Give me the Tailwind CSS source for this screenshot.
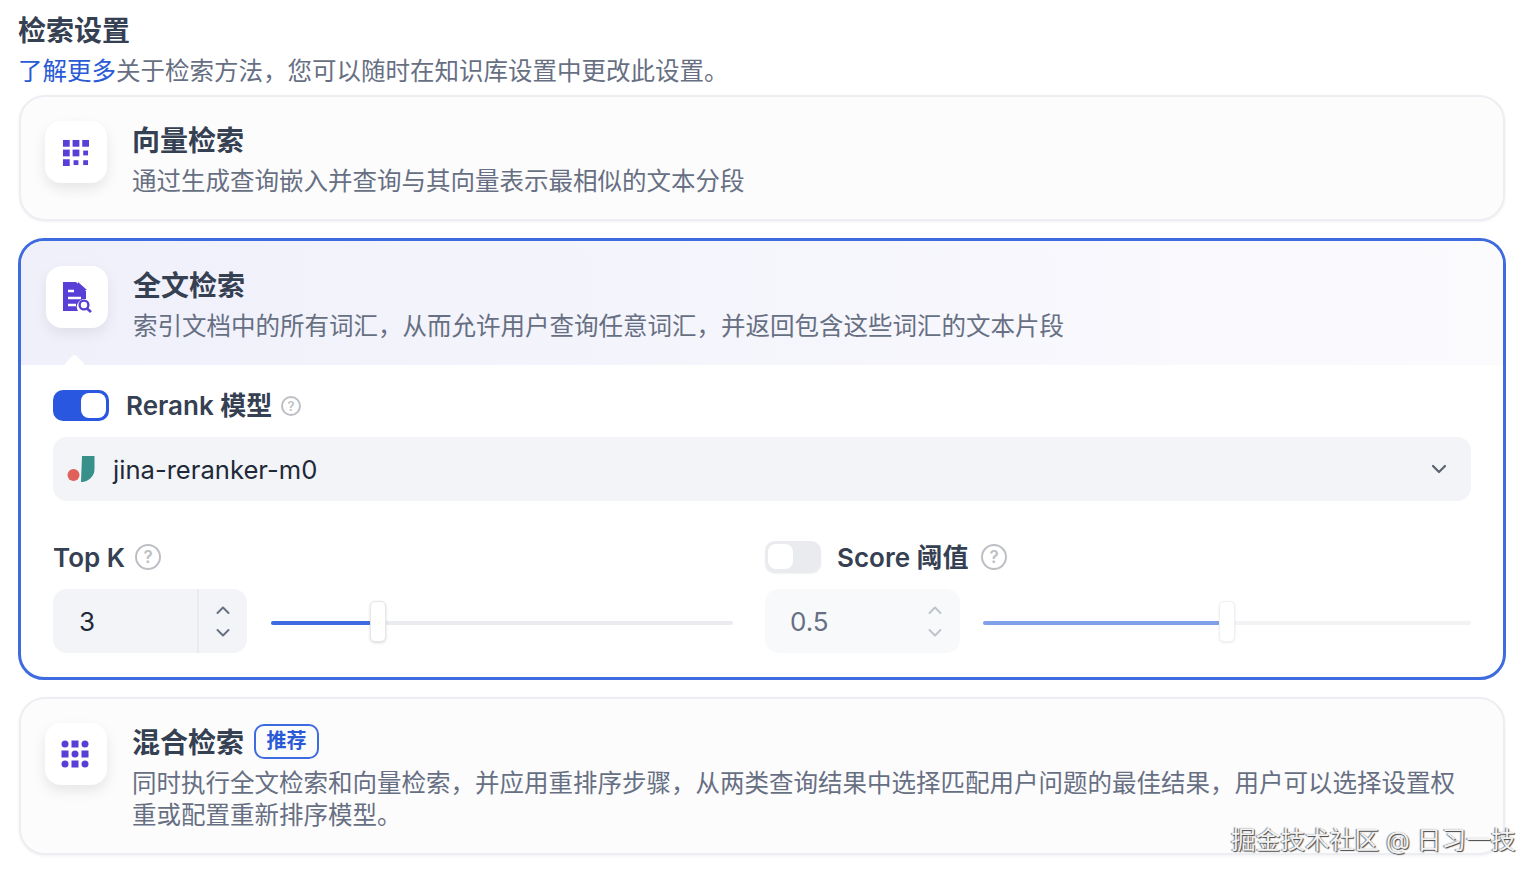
<!DOCTYPE html>
<html lang="zh">
<head>
    <meta charset="UTF-8">
    <meta name="viewport" content="width=device-width, initial-scale=1.0">
    <title>检索设置</title>
    <script src="https://cdn.jsdelivr.net/npm/@tailwindcss/browser@4"></script>
</head>
<body class="bg-white font-['Inter','Noto_Sans_CJK_SC',sans-serif] text-[#354052] overflow-hidden">
<div class="relative w-[1540px] h-[878px] pl-[19px] pr-[35px] pt-[12px]">
    <h1 class="-ml-px text-[28px] leading-[38px] font-semibold">检索设置</h1>
    <p class="-ml-px mt-[5px] mb-[8px] text-[24.5px] leading-[32px] text-[#676f83]"><a href="#" class="text-[#2a5ad6]">了解更多</a>关于检索方法，您可以随时在知识库设置中更改此设置。</p>

    <!-- 向量检索 -->
    <div class="flex gap-[25px] pl-6 pt-6 pb-[22px] border-2 border-[#eceef2] rounded-[26px] bg-[#fcfcfd] shadow-[0_1px_3px_rgba(0,0,0,0.06)]">
        <div class="w-[62px] h-[62px] shrink-0 flex items-center justify-center rounded-[16px] bg-white shadow-[0_6px_14px_rgba(0,0,0,0.09)]">
            <svg class="-ml-0.5" width="27" height="27" viewBox="0 0 28 28" fill="#5a3fd6">
                <rect x="1" y="1" width="7" height="7"/><rect x="11" y="1" width="7" height="7"/><rect x="21" y="1" width="7" height="7"/>
                <rect x="1" y="11" width="7" height="7"/><rect x="11" y="11" width="7" height="7"/><rect x="22" y="12" width="5" height="5"/>
                <rect x="1" y="21" width="7" height="7"/><rect x="12" y="22" width="5" height="5"/><rect x="22" y="22" width="5" height="5"/>
            </svg>
        </div>
        <div class="pt-px">
            <div class="text-[28px] leading-[38px] font-semibold">向量检索</div>
            <div class="mt-[5px] text-[24.5px] leading-[32px] text-[#676f83]">通过生成查询嵌入并查询与其向量表示最相似的文本分段</div>
        </div>
    </div>

    <!-- 全文检索 -->
    <div class="-mx-px mt-[17px] border-[3px] border-[#3e6be0] rounded-[26px] bg-white overflow-hidden">
        <div class="relative flex gap-[25px] pl-[25px] pt-[25px] pb-[23px] bg-gradient-to-r from-[#eff0fa] to-[#fbfbfe]">
            <div class="w-[62px] h-[62px] shrink-0 flex items-center justify-center rounded-[16px] bg-white shadow-[0_6px_14px_rgba(0,0,0,0.07)]">
                <svg width="30" height="32" viewBox="0 0 30 32">
                    <path d="M1 1h13l10 9v8a8 8 0 0 0-8 12H1z" fill="#5a3fd6"/>
                    <path d="M16 1l9 8h-9z" fill="#5a3fd6"/>
                    <path d="M6 10h6M6 17h13M6 24h8" stroke="#fff" stroke-width="2.4"/>
                    <circle cx="22" cy="24" r="4.4" fill="none" stroke="#5a3fd6" stroke-width="2.4"/>
                    <path d="M25 27.5l4 3.5" stroke="#5a3fd6" stroke-width="2.6"/>
                </svg>
            </div>
            <div class="pt-px">
                <div class="text-[28px] leading-[38px] font-semibold">全文检索</div>
                <div class="mt-[5px] text-[24.5px] leading-[32px] text-[#676f83]">索引文档中的所有词汇，从而允许用户查询任意词汇，并返回包含这些词汇的文本片段</div>
            </div>
            <div class="absolute left-[46px] bottom-[-7px] w-[15px] h-[15px] rotate-45 rounded-[3px] bg-white"></div>
        </div>

        <div class="px-8 pt-[25px] pb-6">
            <div class="flex items-center h-[31px]">
                <div class="w-[56px] h-[31px] rounded-[10px] bg-[#2a57e0] p-[3px] flex justify-end">
                    <div class="w-[25px] h-[25px] rounded-[8px] bg-white"></div>
                </div>
                <span class="ml-[17px] text-[26px] font-semibold">Rerank 模型</span>
                <svg class="ml-[9px]" width="20" height="20" viewBox="0 0 20 20">
                    <circle cx="10" cy="10" r="9" fill="none" stroke="#bdbfc4" stroke-width="2"/>
                    <text x="10" y="14.500" text-anchor="middle" font-size="13" font-family="Inter" font-weight="600" fill="#bdbfc4">?</text>
                </svg>
            </div>

            <div class="mt-4 h-[64px] rounded-[14px] bg-[#f2f4f7] flex items-center pl-[14px] pr-[22px]">
                <svg width="28" height="28" viewBox="0 0 28 28">
                    <circle cx="6.500" cy="20" r="6" fill="#e0605c"/>
                    <path d="M15 1h12.500v13a13 13 0 0 1-13.500 13z" fill="#37908a"/>
                </svg>
                <span class="ml-[18px] pt-0.5 text-[25.6px] text-[#1f2937]">jina-reranker-m0</span>
                <svg class="ml-auto" width="20" height="20" viewBox="0 0 20 20" fill="none" stroke="#5b6270" stroke-width="2.2" stroke-linecap="round" stroke-linejoin="round"><path d="M4 7l6 6 6-6"/></svg>
            </div>

            <div class="mt-10 flex gap-8">
                <div class="w-[680px]">
                    <div class="flex items-center h-[32px]">
                        <span class="text-[26px] font-semibold">Top K</span>
                        <svg class="ml-[10px]" width="26" height="26" viewBox="0 0 26 26">
                            <circle cx="13" cy="13" r="12" fill="none" stroke="#bdbfc4" stroke-width="2"/>
                            <text x="13" y="19" text-anchor="middle" font-size="17" font-family="Inter" font-weight="600" fill="#bdbfc4">?</text>
                        </svg>
                    </div>
                    <div class="mt-4 flex items-center">
                        <div class="w-[194px] h-[64px] flex rounded-[14px] bg-[#f2f4f7]">
                            <div class="flex-1 pl-[26px] flex items-center text-[26px] text-[#1f2937]">3</div>
                            <div class="w-[50px] border-l-2 border-[#e9ebef] flex flex-col items-center justify-center gap-[7px]">
                                <svg width="16" height="16" viewBox="0 0 16 16" fill="none" stroke="#676f83" stroke-width="2" stroke-linecap="round" stroke-linejoin="round"><path d="M2.500 11l5.500-5.500 5.500 5.500"/></svg>
                                <svg width="16" height="16" viewBox="0 0 16 16" fill="none" stroke="#676f83" stroke-width="2" stroke-linecap="round" stroke-linejoin="round"><path d="M2.500 5l5.500 5.500 5.500-5.500"/></svg>
                            </div>
                        </div>
                        <div class="relative mt-1 ml-6 flex-1 h-[4px] rounded-full bg-[#e9ebef]">
                            <div class="h-full w-[100px] rounded-full bg-[#3e6be0]"></div>
                            <div class="absolute left-[99px] top-[-20px] w-[16px] h-[41px] rounded-[5px] bg-white border border-[#e4e6ea] shadow-[0_1px_3px_rgba(0,0,0,0.15)]"></div>
                        </div>
                    </div>
                </div>

                <div class="flex-1">
                    <div class="flex items-center h-[32px]">
                        <div class="w-[56px] h-[32px] rounded-[10px] bg-[#e9ebef] p-[3px] shadow-[0_1px_2px_rgba(0,0,0,0.06)]">
                            <div class="w-[25px] h-[25px] rounded-[8px] bg-white"></div>
                        </div>
                        <span class="ml-4 text-[26px] font-semibold">Score 阈值</span>
                        <svg class="ml-[12px]" width="26" height="26" viewBox="0 0 26 26">
                            <circle cx="13" cy="13" r="12" fill="none" stroke="#bdbfc4" stroke-width="2"/>
                            <text x="13" y="19" text-anchor="middle" font-size="17" font-family="Inter" font-weight="600" fill="#bdbfc4">?</text>
                        </svg>
                    </div>
                    <div class="mt-4 flex items-center">
                        <div class="w-[195px] h-[64px] flex rounded-[14px] bg-[#f8f9fb]">
                            <div class="flex-1 pl-[25px] flex items-center text-[26px] text-[#676f83]">0.5</div>
                            <div class="w-[50px] flex flex-col items-center justify-center gap-[7px]">
                                <svg width="16" height="16" viewBox="0 0 16 16" fill="none" stroke="#bfc3cb" stroke-width="2" stroke-linecap="round" stroke-linejoin="round"><path d="M2.500 11l5.500-5.500 5.500 5.500"/></svg>
                                <svg width="16" height="16" viewBox="0 0 16 16" fill="none" stroke="#bfc3cb" stroke-width="2" stroke-linecap="round" stroke-linejoin="round"><path d="M2.500 5l5.500 5.500 5.500-5.500"/></svg>
                            </div>
                        </div>
                        <div class="relative mt-1 ml-[23px] flex-1 h-[4px] rounded-full bg-[#f2f3f5]">
                            <div class="h-full w-[237px] rounded-full bg-[#80a0e8]"></div>
                            <div class="absolute left-[236px] top-[-20px] w-[16px] h-[41px] rounded-[5px] bg-white border border-[#eef0f3] shadow-[0_1px_3px_rgba(0,0,0,0.08)]"></div>
                        </div>
                    </div>
                </div>
            </div>
        </div>
    </div>

    <!-- 混合检索 -->
    <div class="mt-[17px] flex gap-[25px] pl-6 pt-6 pb-[22px] border-2 border-[#eceef2] rounded-[26px] bg-[#fcfcfd] shadow-[0_1px_3px_rgba(0,0,0,0.06)]">
        <div class="w-[62px] h-[62px] shrink-0 flex items-center justify-center rounded-[16px] bg-white shadow-[0_6px_14px_rgba(0,0,0,0.09)]">
            <svg class="-ml-0.5" width="28" height="28" viewBox="0 0 28 28" fill="#5a3fd6">
                <circle cx="4" cy="4" r="3.500"/><rect x="10.500" y="0.500" width="7" height="7"/><circle cx="24" cy="4" r="3.500"/>
                <rect x="0.500" y="10.500" width="7" height="7"/><circle cx="14" cy="14" r="3.500"/><rect x="20.500" y="10.500" width="7" height="7"/>
                <circle cx="4" cy="24" r="3.500"/><rect x="10.500" y="20.500" width="7" height="7"/><circle cx="24" cy="24" r="3.500"/>
            </svg>
        </div>
        <div class="w-[1340px] pt-px">
            <div class="flex items-center h-[38px]">
                <span class="text-[28px] leading-[38px] font-semibold">混合检索</span>
                <span class="ml-[10px] -mt-1 h-[35px] w-[65px] flex items-center justify-center rounded-[10px] border-2 border-[#3e6be0] text-[20px] font-semibold text-[#2a5ad6]">推荐</span>
            </div>
            <div class="mt-[5px] text-[24.5px] leading-[32px] text-[#676f83]">同时执行全文检索和向量检索，并应用重排序步骤，从两类查询结果中选择匹配用户问题的最佳结果，用户可以选择设置权重或配置重新排序模型。</div>
        </div>
    </div>

    <div class="absolute left-[1231px] top-[831px] text-[24.7px] leading-[18px] whitespace-nowrap text-[#f2f2f2] [text-shadow:1px_1px_1px_#444,-1px_0_1px_#777]">掘金技术社区 @ 日习一技</div>
</div>
</body>
</html>
